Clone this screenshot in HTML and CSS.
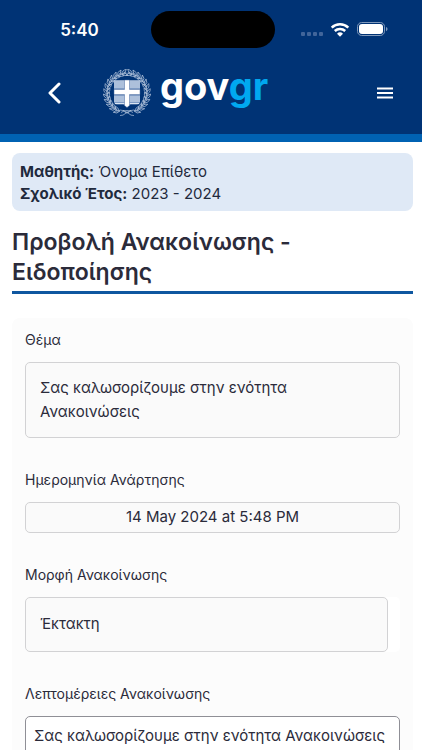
FILE: index.html
```html
<!DOCTYPE html>
<html lang="el">

<head>
    <meta charset="UTF-8">
    <meta name="viewport" content="width=device-width, initial-scale=1">
    <title>Προβολή Ανακοίνωσης - Ειδοποίησης</title>
    <link rel="stylesheet" href="styles.css">
</head>

<body>
    <header class="top">
        <div class="status">
            <span class="time">5:40</span>
            <span class="island"></span>
            <div class="indicators">
                <svg class="signal" width="22" height="4" viewBox="0 0 22 4">
                    <rect x="0" y="0" width="4" height="4" rx="1" />
                    <rect x="6" y="0" width="4" height="4" rx="1" />
                    <rect x="12" y="0" width="4" height="4" rx="1" />
                    <rect x="18" y="0" width="4" height="4" rx="1" />
                </svg>
                <svg class="wifi" width="20" height="14" viewBox="0 0 20 14">
                    <path d="M1.7 4.7a12 12 0 0 1 16.6 0" />
                    <path d="M4.8 8a7.6 7.6 0 0 1 10.4 0" />
                    <path class="wifi-dot" d="M7 10.7a4.5 4.5 0 0 1 6 0L10 13.8z" />
                </svg>
                <svg class="battery" width="31" height="15" viewBox="0 0 31 15">
                    <rect class="battery-case" x="0.5" y="0.5" width="27" height="13" rx="4.2" />
                    <rect x="2" y="2" width="24" height="10" rx="3" />
                    <path class="battery-tip" d="M29 5v4.200q1.600-.6 1.600-2.100T29 5z" />
                </svg>
            </div>
        </div>
        <nav class="navbar">
            <button class="icon-btn" type="button" aria-label="Πίσω">
                <svg width="14" height="22" viewBox="0 0 14 22">
                    <path class="back-line" d="M12 2L3 11l9 9" />
                </svg>
            </button>
            <a class="brand" href="#" aria-label="govgr">
                <svg class="emblem" width="48" height="48" viewBox="0 0 48 48">
                    <defs>
                        <g id="leaf">
                            <path d="M24 4.500q-4.500-.8-5.500-3.500q4.500-.4 5.500 3.500z" />
                            <path d="M24 4.500q-3.500 3.200-5.800 2.800q1.200-3.400 5.800-2.800z" />
                            <circle cx="20.500" cy="4" r=".6" />
                        </g>
                        <g id="leaves">
                            <use href="#leaf" transform="rotate(15 24 24)" />
                            <use href="#leaf" transform="rotate(28 24 24)" />
                            <use href="#leaf" transform="rotate(41 24 24)" />
                            <use href="#leaf" transform="rotate(54 24 24)" />
                            <use href="#leaf" transform="rotate(67 24 24)" />
                            <use href="#leaf" transform="rotate(80 24 24)" />
                            <use href="#leaf" transform="rotate(93 24 24)" />
                            <use href="#leaf" transform="rotate(106 24 24)" />
                            <use href="#leaf" transform="rotate(119 24 24)" />
                            <use href="#leaf" transform="rotate(132 24 24)" />
                            <use href="#leaf" transform="rotate(145 24 24)" />
                            <use href="#leaf" transform="rotate(158 24 24)" />
                        </g>
                    </defs>
                    <g class="wreath">
                        <use href="#leaves" />
                        <use href="#leaves" transform="translate(48 0) scale(-1 1)" />
                        <path d="M17 41q5 0 8 3t6 2.500M31 41q-5 0-8 3t-6 2.500M18 43.500q6-4 12 0M20 41q4 6 8 0" />
                    </g>
                    <path class="shield-field" d="M11 11.500h26v21q0 3-3 3h-6q-3 0-4 2.500q-1-2.500-4-2.500h-6q-3 0-3-3z" />
                    <path class="shield-lines"
                        d="M11 12h26M11 14h26M11 16h26M11 18h26M11 28h26M11 30h26M11 32h26M12 34.500h24" />
                    <path class="shield-cross" d="M21.500 11h5v9.500h10.500v5H26.500v11L24 38.500l-2.500-2V25.500H11v-5h10.500z" />
                </svg>
                <span class="wordmark">gov<span class="wordmark-gr">gr</span></span>
            </a>
            <button class="icon-btn" type="button" aria-label="Μενού">
                <svg width="16" height="12" viewBox="0 0 16 12">
                    <path class="menu-line" d="M0 1.500h16M0 6h16M0 10.500h16" />
                </svg>
            </button>
        </nav>
    </header>

    <main class="page">
        <div class="student">
            <div><strong>Μαθητής:</strong> Όνομα Επίθετο</div>
            <div><strong>Σχολικό Έτος:</strong> 2023 - 2024</div>
        </div>

        <h1>Προβολή Ανακοίνωσης - Ειδοποίησης</h1>

        <form class="card">
            <div class="field">
                <label for="thema">Θέμα</label>
                <textarea id="thema" class="control subject" rows="2" readonly>Σας καλωσορίζουμε στην ενότητα Ανακοινώσεις</textarea>
            </div>
            <div class="field">
                <label for="date">Ημερομηνία Ανάρτησης</label>
                <input id="date" class="control date" type="text" value="14 May 2024 at 5:48 PM" readonly>
            </div>
            <div class="field">
                <label for="morfi">Μορφή Ανακοίνωσης</label>
                <div class="select-wrap">
                    <select id="morfi" class="control kind">
                        <option>Έκτακτη</option>
                    </select>
                </div>
            </div>
            <div class="field">
                <label for="details">Λεπτομέρειες Ανακοίνωσης</label>
                <textarea id="details" class="control details" rows="5" readonly>Σας καλωσορίζουμε στην ενότητα Ανακοινώσεις</textarea>
            </div>
        </form>
    </main>
</body>

</html>
```
FILE: styles.css
```css
* {
    box-sizing: border-box;
}

html {
    scrollbar-width: none;
}

body {
    margin: 0;
    background: #fff;
    color: #2b2b3a;
    font-family: Inter, "Noto Sans", sans-serif;
    font-size: 15px;
    line-height: 24px;
}

/* header */
.top {
    background: #003375;
    border-bottom: 8px solid #0062b3;
    padding-bottom: 6px;
}

.status {
    display: grid;
    grid-template-columns: 1fr 124px 1fr;
    align-items: center;
    padding: 11px 0 0 4px;
    color: #fff;
}

.time {
    padding-left: 4px;
    text-align: center;
    font-size: 17px;
    font-weight: 600;
}

.island {
    height: 37px;
    border-radius: 20px;
    background: #000;
}

.indicators {
    display: flex;
    align-items: center;
    justify-content: flex-end;
    gap: 7px;
    padding-right: 34px;
}

.indicators svg {
    fill: #fff;
}

.indicators .signal {
    margin-top: 8px;
    fill: #41659a;
}

.indicators .wifi {
    fill: none;
    stroke: #fff;
    stroke-width: 2.5;
}

.wifi .wifi-dot {
    fill: #fff;
    stroke: none;
}

.battery .battery-case {
    fill: none;
    stroke: #7f98ba;
}

.battery .battery-tip {
    fill: #7f98ba;
}

.navbar {
    display: flex;
    align-items: center;
    justify-content: space-between;
    height: 70px;
    padding: 0 24px 0 41px;
    margin-top: 10px;
}

.icon-btn {
    display: flex;
    align-items: center;
    justify-content: center;
    width: 26px;
    height: 40px;
    padding: 0;
    border: none;
    background: none;
    cursor: pointer;
}

.back-line,
.menu-line {
    fill: none;
    stroke: #fff;
    stroke-width: 3;
    stroke-linecap: round;
    stroke-linejoin: round;
}

.menu-line {
    stroke-width: 2;
    stroke-linecap: butt;
}

.brand {
    display: flex;
    align-items: center;
    gap: 9px;
    padding-right: 68px;
    color: #fff;
    text-decoration: none;
}

.wordmark {
    padding-bottom: 14px;
    font-size: 38px;
    font-weight: 700;
    line-height: 40px;
}

.wordmark-gr {
    color: #00a8f0;
}

.wreath {
    fill: none;
    stroke: #b3c4dc;
    stroke-width: 0.7;
}

.shield-field {
    fill: #7e9bc4;
}

.shield-lines {
    stroke: #dbe5f2;
}

.shield-cross {
    fill: #fff;
    stroke: #47699f;
    stroke-width: 0.5;
}

/* content */
.page {
    padding: 11px 9px 24px 12px;
}

.student {
    padding: 8px 8px 6px;
    border-radius: 8px;
    background: #dfe9f6;
    color: #1f2a3d;
    line-height: 22px;
}

h1 {
    margin: 16px 0 24px;
    padding-bottom: 4px;
    border-bottom: 3px solid #0f57a0;
    font-size: 23px;
    font-weight: 600;
    line-height: 30px;
}

.card {
    display: flex;
    flex-direction: column;
    gap: 32px;
    padding: 12px 13px;
    border-radius: 8px;
    background: #fcfcfc;
}

.field {
    display: flex;
    flex-direction: column;
    gap: 12px;
}

label {
    font-size: 14px;
    line-height: 20px;
}

.control {
    display: block;
    width: 100%;
    margin: 0;
    border: 1px solid #d2d2d4;
    border-radius: 5px;
    background: #fafafa;
    color: inherit;
    font: inherit;
    resize: none;
    outline: none;
    appearance: none;
}

.subject {
    padding: 13px 14px;
    overflow: hidden;
}

.date {
    height: 31px;
    padding: 0 8px 3px;
    text-align: center;
}

.select-wrap {
    padding-right: 12px;
    border-radius: 5px;
    background: #fff;
}

.kind {
    height: 55px;
    padding: 0 14px 2px;
}

.details {
    padding: 7px 8px;
    border-color: #8f8f96;
    background: #fff;
}
```
